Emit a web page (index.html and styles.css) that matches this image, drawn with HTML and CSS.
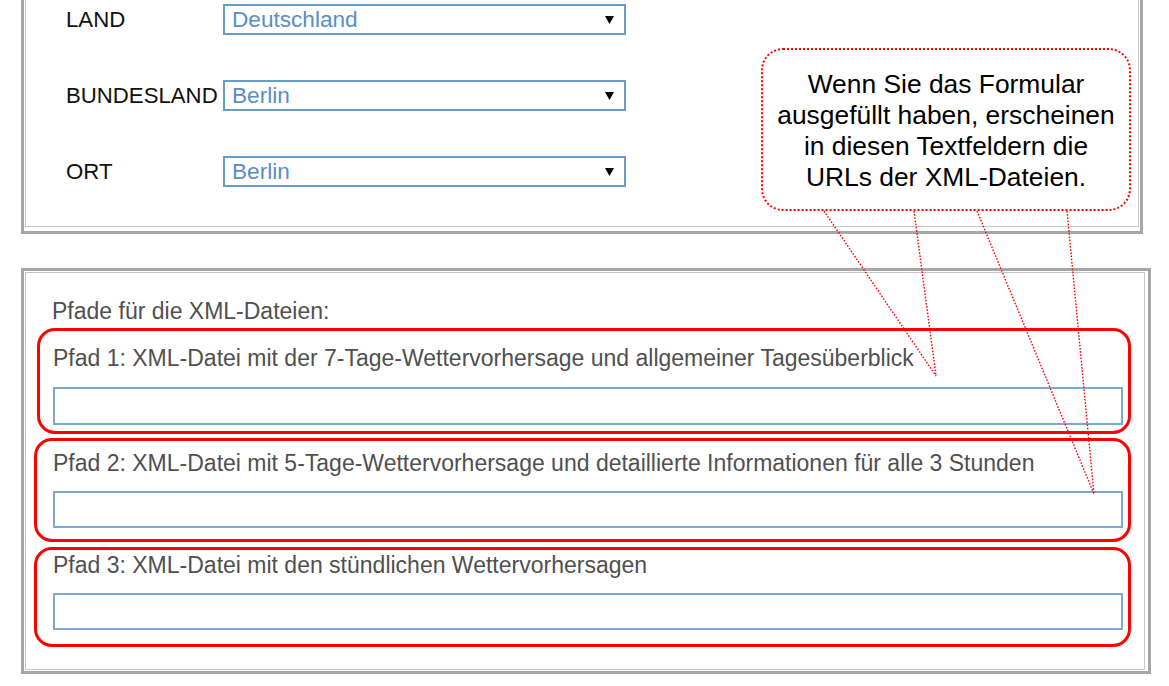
FILE: index.html
```html
<!DOCTYPE html>
<html lang="de">
<head>
<meta charset="utf-8">
<title>Pfade für die XML-Dateien</title>
<link rel="stylesheet" href="styles.css">
</head>
<body>
<div class="page">
  <section class="panel panel-location">
    <div class="panel-inner location-inner">
      <div class="location-form">
        <div class="loc-row">
          <span class="loc-label">LAND</span>
          <div class="select"><span>Deutschland</span><svg class="select-arrow" width="9" height="8" viewBox="0 0 9 8"><path d="M0 0H9L4.5 8Z"/></svg></div>
        </div>
        <div class="loc-row">
          <span class="loc-label">BUNDESLAND</span>
          <div class="select"><span>Berlin</span><svg class="select-arrow" width="9" height="8" viewBox="0 0 9 8"><path d="M0 0H9L4.5 8Z"/></svg></div>
        </div>
        <div class="loc-row">
          <span class="loc-label">ORT</span>
          <div class="select"><span>Berlin</span><svg class="select-arrow" width="9" height="8" viewBox="0 0 9 8"><path d="M0 0H9L4.5 8Z"/></svg></div>
        </div>
      </div>
      <div class="callout">Wenn Sie das Formular<br>ausgefüllt haben, erscheinen<br>in diesen Textfeldern die<br>URLs der XML-Dateien.</div>
    </div>
  </section>

  <section class="panel panel-paths">
    <div class="panel-inner paths-inner">
      <p class="paths-title">Pfade für die XML-Dateien:</p>
      <div class="group group-1">
        <label class="field-label" for="p1">Pfad 1: XML-Datei mit der 7-Tage-Wettervorhersage und allgemeiner Tagesüberblick</label>
        <input class="field-input" id="p1" type="text">
      </div>
      <div class="group group-2">
        <label class="field-label" for="p2">Pfad 2: XML-Datei mit 5-Tage-Wettervorhersage und detaillierte Informationen für alle 3 Stunden</label>
        <input class="field-input" id="p2" type="text">
      </div>
      <div class="group group-3">
        <label class="field-label" for="p3">Pfad 3: XML-Datei mit den stündlichen Wettervorhersagen</label>
        <input class="field-input" id="p3" type="text">
      </div>
    </div>
  </section>

  <svg class="pointers" width="1169" height="686" viewBox="0 0 1169 686">
    <g stroke="#ff0000" stroke-width="1.4" stroke-dasharray="1.6 1.6" fill="none">
      <line x1="824" y1="211" x2="936" y2="376"/>
      <line x1="914" y1="211" x2="936" y2="376"/>
      <line x1="977" y1="211" x2="1094" y2="494"/>
      <line x1="1067" y1="211" x2="1094" y2="494"/>
    </g>
  </svg>
</div>
</body>
</html>
```

FILE: styles.css
```css
html, body {
  margin: 0;
  padding: 0;
  background: #ffffff;
}

body {
  font-family: "Liberation Sans", Arial, sans-serif;
  overflow: hidden;
}

.page {
  position: relative;
  display: flow-root;
  width: 1169px;
  height: 686px;
}

.panel {
  box-sizing: border-box;
  border: 3px solid #a6a6a6;
}

.panel-inner {
  border: 1px solid #c6c6c6;
}

.panel-location {
  width: 1122px;
  margin: -20px 0 0 21px;
  padding: 2px 1px 4px 1px;
}

.location-inner {
  display: flex;
  align-items: flex-start;
  padding: 18px 7px 15px 40px;
}

.location-form {
  display: flex;
  flex-direction: column;
  gap: 45px;
}

.loc-row {
  display: flex;
  align-items: center;
}

.loc-label {
  width: 157px;
  font-size: 22.2px;
  color: #111;
}

.select {
  box-sizing: border-box;
  width: 403px;
  height: 31px;
  border: 2px solid #6b9bc9;
  padding: 0 10px 0 7px;
  display: flex;
  align-items: center;
  justify-content: space-between;
  font-size: 22.6px;
  color: #5b8dc4;
  background: #fff;
}

.select-arrow {
  display: block;
  fill: #000;
}

.callout {
  box-sizing: border-box;
  width: 370px;
  height: 163px;
  margin: 44px 0 0 auto;
  padding-top: 3px;
  border: 2px dotted #ff0000;
  border-radius: 22px;
  display: flex;
  align-items: center;
  justify-content: center;
  text-align: center;
  font-size: 26.4px;
  line-height: 31px;
  color: #000;
  background: #fff;
}

.panel-paths {
  width: 1130px;
  margin: 34px 0 0 21px;
  padding: 1px 3px 1px 1px;
}

.paths-inner {
  padding: 25px 13px 22px 0;
}

.paths-title {
  margin: 0 0 0 26px;
  font-size: 23px;
  line-height: 26px;
  color: #505050;
}

.group {
  border: 3px solid #ff0000;
  border-radius: 18px;
}

.group-1 {
  margin: 4px 0 0 11px;
  padding: 14px 5px 6px 13px;
}

.group-2 {
  margin: 4px 0 0 8px;
  padding: 9px 5px 11px 16px;
}

.group-3 {
  margin: 5px 0 0 8px;
  padding: 2px 5px 14px 16px;
}

.field-label {
  display: block;
  font-size: 23px;
  line-height: 26px;
  color: #505050;
  white-space: nowrap;
}

.field-input {
  display: block;
  box-sizing: border-box;
  width: 100%;
  height: 37px;
  margin: 15px 0 0 0;
  padding: 0;
  border: 2px solid #7fa8cf;
  background: #fff;
  outline: none;
  font: inherit;
}

.group-1 .field-input {
  height: 38px;
  margin-top: 16px;
}

.pointers {
  position: absolute;
  top: 0;
  left: 0;
  pointer-events: none;
}
```
